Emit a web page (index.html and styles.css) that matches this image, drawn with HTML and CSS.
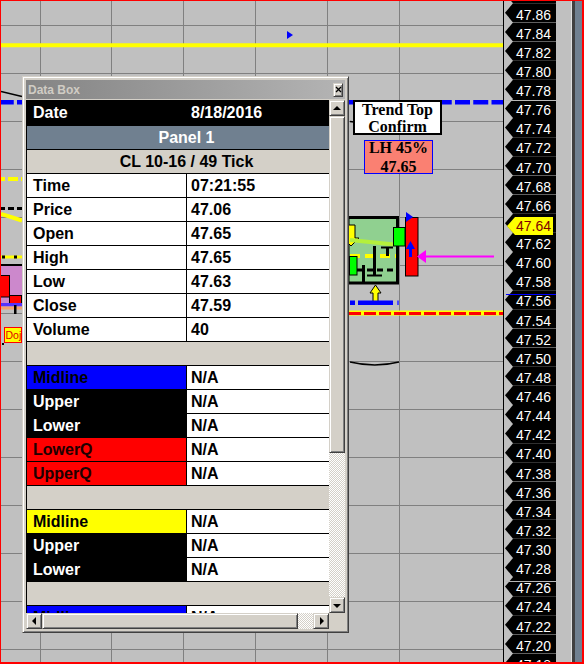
FILE: index.html
```html
<!DOCTYPE html>
<html>
<head>
<meta charset="utf-8">
<title>Chart with Data Box</title>
<link rel="stylesheet" href="styles.css">
</head>
<body>
<div class="screen">
  <div class="plot">
    <svg class="chart" viewBox="1 1 502 661" width="502" height="661" xmlns="http://www.w3.org/2000/svg">
      <g stroke="#808080" stroke-width="1" shape-rendering="crispEdges" fill="none">
        <path d="M40.5 1V662M111.5 1V662M183.5 1V662M255.5 1V662M327.5 1V662M399.5 1V662"/>
        <path d="M1 25.5H503M1 73.5H503M1 121.5H503M1 169.5H503M1 217.5H503M1 265.5H503M1 313.5H503M1 361.5H503M1 409.5H503M1 457.5H503M1 505.5H503M1 553.5H503M1 601.5H503M1 649.5H503"/>
      </g>
      <line x1="1" y1="45.3" x2="503" y2="45.3" stroke="#ffff00" stroke-width="4"/>
      <polygon points="287,31 293,35 287,39" fill="#0000ff"/>
      <line x1="1" y1="91.5" x2="22" y2="96.5" stroke="#000" stroke-width="1.6"/>
      <line x1="350" y1="121.5" x2="354" y2="122" stroke="#000" stroke-width="1.5"/>
      <line x1="1" y1="102.3" x2="503" y2="102.3" stroke="#0000ff" stroke-width="4.6" stroke-dasharray="15 3.25" stroke-dashoffset="2.25"/>

      <!-- left visible strip -->
      <line x1="1" y1="179" x2="22" y2="179" stroke="#ffff00" stroke-width="4" stroke-dasharray="10 3" stroke-dashoffset="6"/>
      <line x1="1" y1="208.5" x2="22" y2="208.5" stroke="#000" stroke-width="3" stroke-dasharray="6 3" stroke-dashoffset="2"/>
      <line x1="1" y1="214" x2="22" y2="220.5" stroke="#ffff00" stroke-width="4"/>
      <line x1="1" y1="257" x2="22" y2="257" stroke="#ffff00" stroke-width="3"/>
      <rect x="2" y="255.5" width="3" height="3" fill="#000"/>
      <rect x="14" y="255.5" width="3" height="3" fill="#000"/>
      <line x1="1" y1="265" x2="22" y2="265" stroke="#000" stroke-width="2"/>
      <rect x="1" y="266" width="21" height="37" fill="#cc88cc"/>
      <rect x="0.5" y="275.5" width="9" height="21.5" fill="#ff0000" stroke="#000" stroke-width="1"/>
      <rect x="9.5" y="295.5" width="12" height="9.5" fill="#ff0000" stroke="#000" stroke-width="1"/>
      <rect x="1" y="303" width="21" height="3.5" fill="#5533ff"/>
      <rect x="1" y="306.5" width="21" height="3" fill="#f4a070"/>
      <rect x="14" y="305" width="2.5" height="9" fill="#000"/>
      <rect x="4.5" y="327.5" width="17" height="15" fill="#ffff00" stroke="#ff0000" stroke-width="1"/>
      <text x="5.5" y="339" font-family="Liberation Sans, Arial, sans-serif" font-size="10.5" fill="#e00000">Doj</text>
      <rect x="2" y="343" width="2" height="2" fill="#000"/>

      <!-- right of data box -->
      <rect x="348" y="217.5" width="49.5" height="65.5" fill="#90d090" stroke="#000" stroke-width="3"/>
      <polygon points="344,225 355,225 355,238 359,238 351,246 343,238 344,238" fill="#ffff00" stroke="#000" stroke-width="1"/>
      <line x1="350" y1="240" x2="394" y2="244.5" stroke="#b4f03c" stroke-width="4"/>
      <line x1="350" y1="256" x2="396" y2="256" stroke="#ffff00" stroke-width="4" stroke-dasharray="10 5"/>
      <line x1="357" y1="270" x2="397" y2="270" stroke="#000" stroke-width="3" stroke-dasharray="6 4"/>
      <rect x="373" y="246" width="3" height="30" fill="#000"/>
      <rect x="367" y="274.5" width="15" height="2" fill="#000"/>
      <rect x="386" y="247" width="3" height="9" fill="#000"/>
      <rect x="381" y="246.5" width="12" height="2" fill="#000"/>
      <rect x="362" y="265" width="3" height="19" fill="#000"/>
      <rect x="393.5" y="227.5" width="11.5" height="18.5" fill="#00ff00" stroke="#000" stroke-width="1"/>
      <rect x="349.5" y="256.5" width="7.5" height="18.5" fill="#00ff00" stroke="#000" stroke-width="1"/>
      <rect x="405.5" y="217.5" width="12.5" height="58.5" fill="#ff0000" stroke="#000" stroke-width="1"/>
      <polygon points="406,212 413,217 406,222" fill="#0000ff"/>
      <polygon points="410.5,241 415,249 412,249 412,257 409,257 409,249 406,249" fill="#0000ff"/>
      <polygon points="417,256.5 426,250 426,263" fill="#ff00ff"/>
      <line x1="425" y1="256.5" x2="494" y2="256.5" stroke="#ff00ff" stroke-width="2"/>
      <polygon points="375.5,285 381,293 378,293 378,304 373,304 373,293 370,293" fill="#ffff00" stroke="#000" stroke-width="1"/>
      <g fill="#0000ff">
        <rect x="350" y="300.5" width="5" height="4.5"/>
        <rect x="358" y="300.5" width="35" height="4.5"/>
        <rect x="397" y="300.5" width="2" height="4.5" fill="#4a4aff"/>
      </g>
      <line x1="349" y1="313" x2="503" y2="313" stroke="#ffff00" stroke-width="5"/>
      <line x1="349" y1="313.5" x2="503" y2="313.5" stroke="#ff0000" stroke-width="3" stroke-dasharray="12 3"/>
      <path d="M350 362 Q375 368 399 362" stroke="#000" stroke-width="1.5" fill="none"/>
    </svg>

    <div class="note trend"><div class="note-text">Trend Top<br>Confirm</div></div>
    <div class="note lh"><div class="note-text">LH 45%<br>47.65</div></div>

    <div class="databox">
      <div class="titlebar">
        <span class="title">Data Box</span>
        <span class="close raised"><svg width="7" height="7" viewBox="0 0 7 7"><path d="M1 1L6 6M6 1L1 6" stroke="#000" stroke-width="1.3"/></svg></span>
      </div>
      <div class="client">
        <div class="viewport">
          <div class="table">
            <div class="row row-date"><div class="lbl">Date</div><div class="val">8/18/2016</div></div>
            <div class="row row-span row-panel">Panel 1</div>
            <div class="row row-span row-instr">CL 10-16 / 49 Tick</div>
            <div class="row"><div class="lbl">Time</div><div class="val">07:21:55</div></div>
            <div class="row"><div class="lbl">Price</div><div class="val">47.06</div></div>
            <div class="row"><div class="lbl">Open</div><div class="val">47.65</div></div>
            <div class="row"><div class="lbl">High</div><div class="val">47.65</div></div>
            <div class="row"><div class="lbl">Low</div><div class="val">47.63</div></div>
            <div class="row"><div class="lbl">Close</div><div class="val">47.59</div></div>
            <div class="row"><div class="lbl">Volume</div><div class="val">40</div></div>
            <div class="row row-blank"></div>
            <div class="row"><div class="lbl c-blue">Midline</div><div class="val">N/A</div></div>
            <div class="row"><div class="lbl c-black">Upper</div><div class="val">N/A</div></div>
            <div class="row"><div class="lbl c-black">Lower</div><div class="val">N/A</div></div>
            <div class="row"><div class="lbl c-red">LowerQ</div><div class="val">N/A</div></div>
            <div class="row"><div class="lbl c-red">UpperQ</div><div class="val">N/A</div></div>
            <div class="row row-blank"></div>
            <div class="row"><div class="lbl c-yellow">Midline</div><div class="val">N/A</div></div>
            <div class="row"><div class="lbl c-black">Upper</div><div class="val">N/A</div></div>
            <div class="row"><div class="lbl c-black">Lower</div><div class="val">N/A</div></div>
            <div class="row row-blank"></div>
            <div class="row"><div class="lbl c-blue">Midline</div><div class="val">N/A</div></div>
          </div>
        </div>
        <div class="vscroll">
          <div class="sbtn raised"><span class="arr arr-up"></span></div>
          <div class="vthumb raised"></div>
          <div class="track"></div>
          <div class="sbtn raised"><span class="arr arr-down"></span></div>
        </div>
        <div class="hscroll">
          <div class="sbtn raised"><span class="arr arr-left"></span></div>
          <div class="hthumb raised"></div>
          <div class="track"></div>
          <div class="sbtn raised"><span class="arr arr-right"></span></div>
        </div>
        <div class="corner"></div>
      </div>
    </div>
  </div>

  <div class="axis">
    <div class="ticks">
      <div class="tick"></div>
      <div class="tick">47.86</div>
      <div class="tick">47.84</div>
      <div class="tick">47.82</div>
      <div class="tick">47.80</div>
      <div class="tick">47.78</div>
      <div class="tick">47.76</div>
      <div class="tick">47.74</div>
      <div class="tick">47.72</div>
      <div class="tick">47.70</div>
      <div class="tick">47.68</div>
      <div class="tick">47.66</div>
      <div class="tick">47.64</div>
      <div class="tick">47.62</div>
      <div class="tick">47.60</div>
      <div class="tick">47.58</div>
      <div class="tick">47.56</div>
      <div class="tick">47.54</div>
      <div class="tick">47.52</div>
      <div class="tick">47.50</div>
      <div class="tick">47.48</div>
      <div class="tick">47.46</div>
      <div class="tick">47.44</div>
      <div class="tick">47.42</div>
      <div class="tick">47.40</div>
      <div class="tick">47.38</div>
      <div class="tick">47.36</div>
      <div class="tick">47.34</div>
      <div class="tick">47.32</div>
      <div class="tick">47.30</div>
      <div class="tick">47.28</div>
      <div class="tick">47.26</div>
      <div class="tick">47.24</div>
      <div class="tick">47.22</div>
      <div class="tick">47.20</div>
      <div class="tick">47.18</div>
    </div>
    <div class="axis-rule rule-a"></div>
    <div class="axis-rule rule-b"></div>
    <div class="axis-rule rule-blue"></div>
    <div class="cur">47.64</div>
  </div>
  <div class="gutter"></div>
  <div class="edge-light"></div>
  <div class="edge-dark"></div>
  <div class="side-panel"></div>
</div>
</body>
</html>
```

FILE: styles.css
```css
* { box-sizing: border-box; }
html, body { margin: 0; padding: 0; }
body {
  width: 584px;
  height: 664px;
  overflow: hidden;
  font-family: "Liberation Sans", Arial, sans-serif;
  background: #c0c0c0;
}

.screen {
  width: 584px;
  height: 664px;
  display: flex;
  border-style: solid;
  border-color: #ff0000;
  border-width: 1px 2px 2px 1px;
  background: #c0c0c0;
}

/* ---------- plot canvas ---------- */
.plot {
  position: relative;
  flex: none;
  width: 502px;
  height: 661px;
  overflow: hidden;
  background: #c0c0c0;
}
.chart { display: block; }

.note {
  position: absolute;
  font-family: "Liberation Serif", "Times New Roman", serif;
  font-weight: bold;
  font-size: 16px;
  text-align: center;
  color: #000;
  white-space: nowrap;
}
.trend {
  left: 352px;
  top: 99px;
  width: 89px;
  height: 35px;
  border: 2px solid #000;
  background: #fff;
  line-height: 17.7px;
}
.trend .note-text { margin-top: -1.25px; }
.lh {
  left: 363px;
  top: 139px;
  width: 69px;
  height: 34px;
  border: 1px solid #0000ff;
  background: #fa8072;
  line-height: 18.7px;
}
.lh .note-text { margin-top: -1.75px; }

/* ---------- data box window ---------- */
.databox {
  position: absolute;
  left: 21px;
  top: 75px;
  width: 327px;
  height: 557px;
  padding: 3px;
  background: #d4d0c8;
  border: 1px solid;
  border-color: #d4d0c8 #404040 #404040 #d4d0c8;
  box-shadow: inset 1px 1px #ffffff, inset -1px -1px #808080;
}
.titlebar {
  height: 19px;
  margin-bottom: 1px;
  padding: 0 2px 0 2px;
  display: flex;
  align-items: center;
  justify-content: space-between;
  background: linear-gradient(90deg, #848484, #b4b4b4);
}
.title {
  font: bold 12px "Liberation Sans", Arial, sans-serif;
  color: #d0ccc4;
}
.close {
  width: 10px;
  height: 14px;
  display: flex;
  align-items: center;
  justify-content: center;
}
.close svg { display: block; }

.raised {
  background: #d4d0c8;
  border: 1px solid;
  border-color: #d4d0c8 #404040 #404040 #d4d0c8;
  box-shadow: inset 1px 1px #ffffff, inset -1px -1px #808080;
}

.client {
  display: grid;
  grid-template-columns: 303px 16px;
  grid-template-rows: 513px 16px;
}
.viewport {
  overflow: hidden;
  background: #d4d0c8;
}
.table {
  width: 320px;
  border-left: 1px solid #000;
  font: bold 16px/23px "Liberation Sans", Arial, sans-serif;
}
.row {
  display: grid;
  grid-template-columns: 159px 160px;
  height: 24px;
  border-bottom: 1px solid #000;
  background: #fff;
  color: #000;
  white-space: nowrap;
}
.lbl { padding-left: 6px; overflow: hidden; }
.val { padding-left: 4px; border-left: 1px solid #000; overflow: hidden; }

.row-date {
  height: 26px;
  border-bottom: 0;
  background: #000;
  color: #fff;
  line-height: 26px;
}
.row-span { display: block; text-align: center; }
.row-panel { background: #708090; color: #fff; }
.row-instr { background: #d4d0c8; }
.row-blank { background: #d4d0c8; }

.c-blue { background: #0000ff; color: #000; }
.c-black { background: #000; color: #fff; }
.c-red { background: #ff0000; color: #200000; }
.c-yellow { background: #ffff00; color: #000; }

.vscroll { display: flex; flex-direction: column; }
.hscroll { display: flex; }
.sbtn {
  flex: none;
  width: 16px;
  height: 16px;
  display: flex;
  align-items: center;
  justify-content: center;
}
.vthumb { flex: none; height: 337px; }
.hthumb { flex: none; width: 256px; }
.track {
  flex: 1;
  background-color: #ffffff;
  background-image: repeating-conic-gradient(#d4d0c8 0 25%, #ffffff 0 50%);
  background-size: 2px 2px;
}
.corner { background: #d4d0c8; }

.arr { width: 0; height: 0; border-style: solid; border-color: transparent; }
.arr-up { border-width: 0 4px 4px 4px; border-bottom-color: #000; }
.arr-down { border-width: 4px 4px 0 4px; border-top-color: #000; margin-top: 1px; }
.arr-left { border-width: 4px 4px 4px 0; border-right-color: #000; }
.arr-right { border-width: 4px 0 4px 4px; border-left-color: #000; margin-left: 1px; }

/* ---------- price axis ---------- */
.axis {
  position: relative;
  flex: none;
  width: 53px;
  border-left: 1px solid #000;
  overflow: hidden;
  background: #c0c0c0;
}
.ticks {
  display: flex;
  flex-direction: column;
  margin-top: -16.83px;
}
.tick {
  flex: none;
  height: 19.13px;
  padding: 2.3px 5px 0 0;
  background: #000;
  color: #ffffff;
  font-size: 14px;
  line-height: 19.13px;
  text-align: right;
  clip-path: polygon(1px 50%, 9px 0, 100% 0, 100% 100%, 9px 100%);
}
.axis-rule {
  position: absolute;
  left: 2px;
  right: 0;
  height: 1px;
  background: #b8b8b8;
}
.rule-a { top: 99px; }
.rule-b { top: 580px; }
.rule-blue { top: 293px; background: #0000ff; }
.cur {
  position: absolute;
  left: 3px;
  top: 216px;
  width: 46px;
  height: 18px;
  padding-right: 2px;
  background: #ffff00;
  color: #800000;
  font-size: 14px;
  line-height: 18px;
  text-align: right;
  clip-path: polygon(0 50%, 8px 0, 100% 0, 100% 100%, 8px 100%);
}

/* ---------- right edge ---------- */
.gutter { flex: none; width: 15px; background: #c0c0c0; }
.edge-light { flex: none; width: 1px; background: #e0e0e0; }
.edge-dark { flex: none; width: 3px; background: #404040; }
.side-panel { flex: none; width: 7px; background: #708090; }
```
